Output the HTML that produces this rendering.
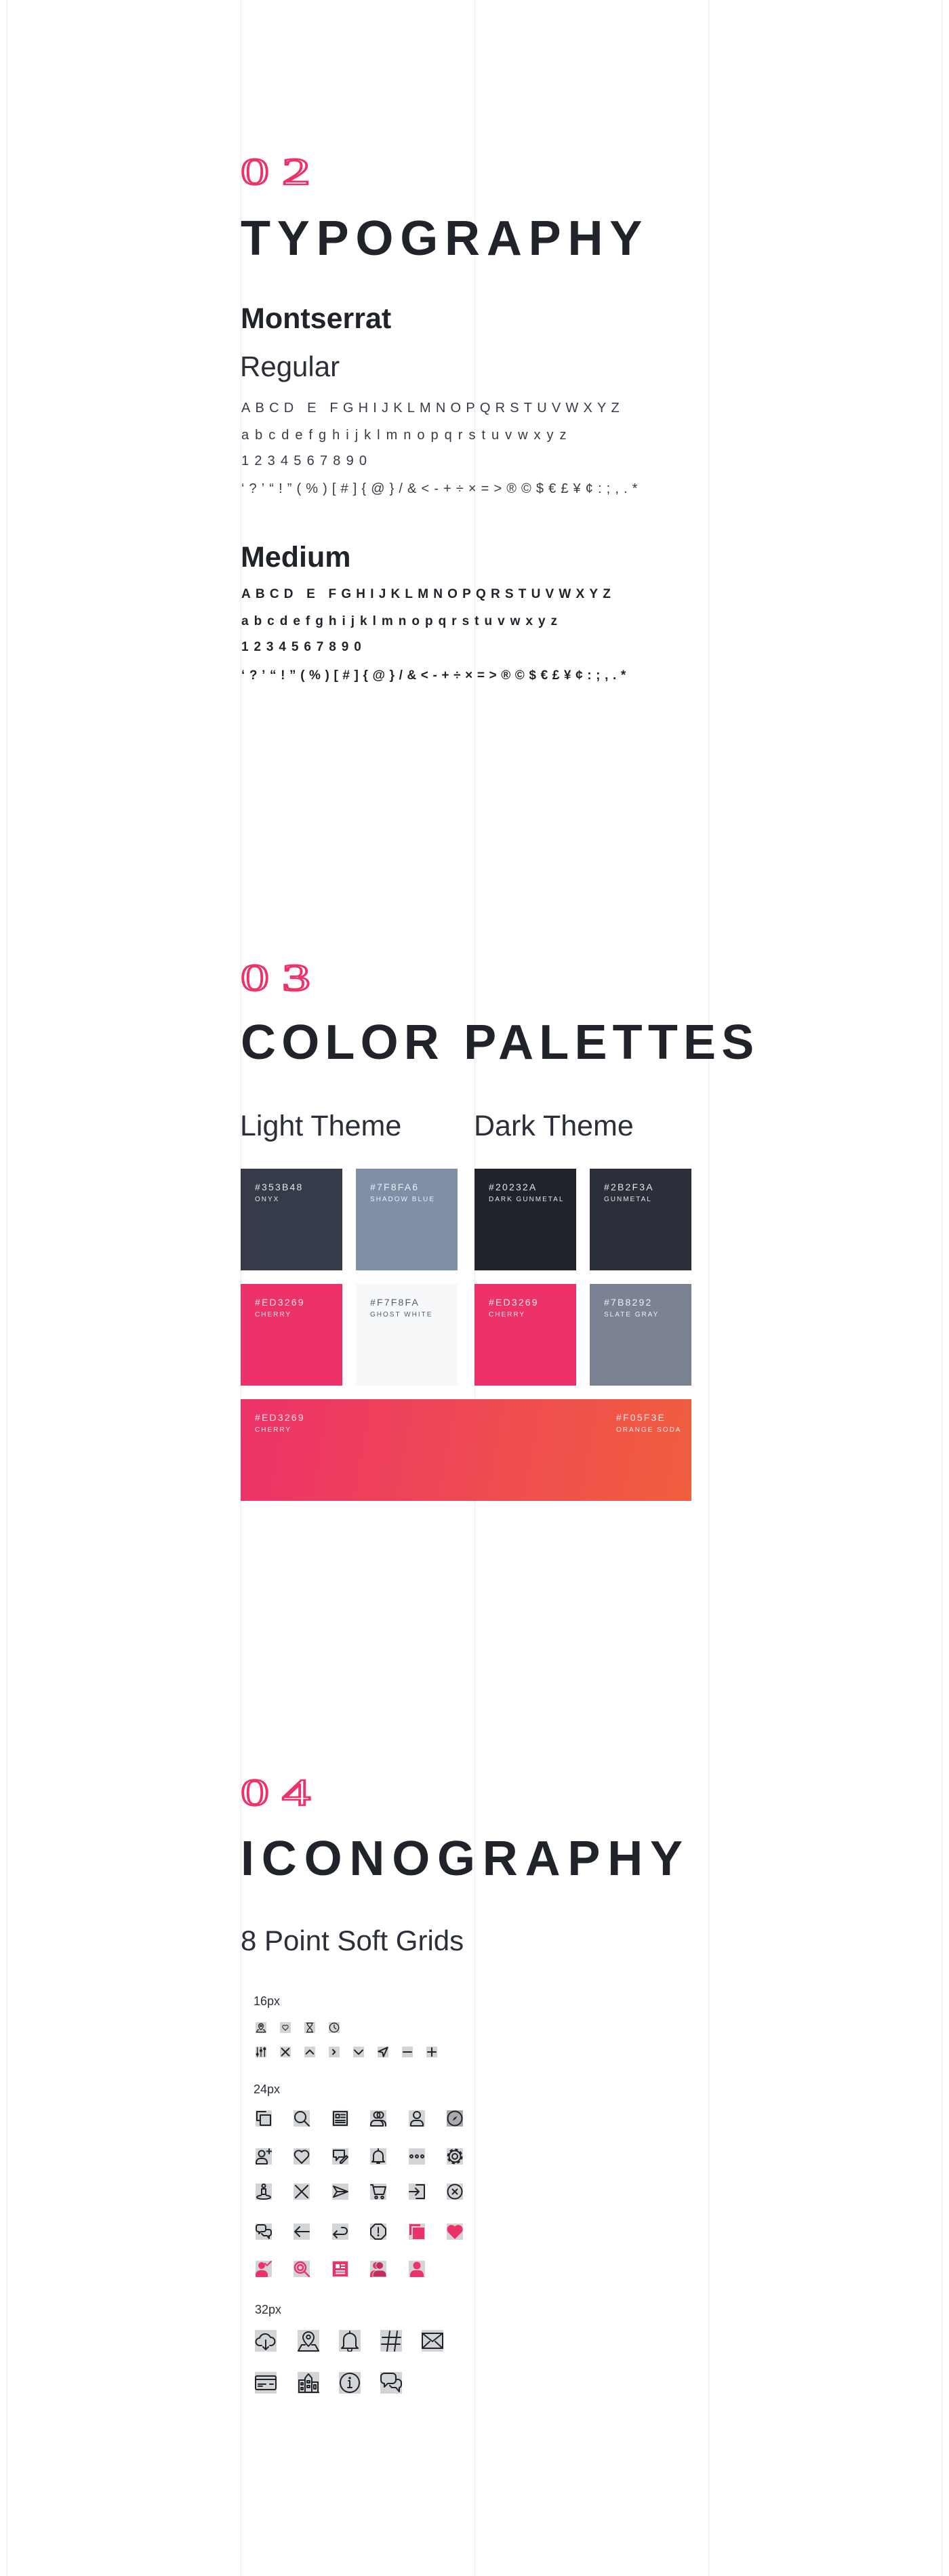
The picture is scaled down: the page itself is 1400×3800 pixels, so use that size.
<!DOCTYPE html>
<html><head><meta charset="utf-8">
<style>
*{margin:0;padding:0;box-sizing:border-box}
html,body{width:1400px;height:3800px;background:#fff;overflow:hidden}
body{position:relative;font-family:"Liberation Sans",sans-serif;color:#20232a}
.vl{position:absolute;top:0;width:1px;height:3800px;background:#ebebeb}
.a{position:absolute;line-height:1;white-space:nowrap}
.num{position:absolute;line-height:1;font-family:"Liberation Serif",serif;font-size:56px;color:transparent;-webkit-text-stroke:2.6px #ed3269;transform:scaleX(1.5);transform-origin:left top}
.h1{font-size:72px;font-weight:bold;color:#20232a}
.sw{position:absolute;width:150px;height:150px}
.sw .hx{position:absolute;left:21px;top:20px;font-size:14px;letter-spacing:2.2px;line-height:1}
.sw .lb{position:absolute;left:21px;top:41px;font-size:10px;letter-spacing:2px;line-height:1}
svg.i{position:absolute;background:#d3d4d6}
svg.i *{fill:none;stroke:#20232a;stroke-width:2;stroke-linecap:round;stroke-linejoin:round}
svg.i .f{fill:#20232a;stroke:none}
svg.i .p{fill:#ed3269;stroke:none}
svg.i .ps{stroke:#ed3269}
svg.i .w{fill:#fff;stroke:none}
</style></head><body>
<div class="vl" style="left:10px"></div>
<div class="vl" style="left:355px"></div>
<div class="vl" style="left:700px"></div>
<div class="vl" style="left:1045px"></div>
<div class="vl" style="left:1389px"></div>

<!-- 02 TYPOGRAPHY -->
<div class="num" style="left:355px;top:226px">0</div>
<div class="num" style="left:416px;top:226px">2</div>
<div class="a h1" style="left:355px;top:316px;letter-spacing:9.8px">TYPOGRAPHY</div>
<div class="a" style="left:355px;top:449px;font-size:43px;font-weight:bold">Montserrat</div>
<div class="a" style="left:354px;top:520px;font-size:42px;color:#2b2f3a">Regular</div>
<div class="a" style="left:356px;top:592px;font-size:20px;letter-spacing:7.2px;color:#353b48">ABCD E FGHIJKLMNOPQRSTUVWXYZ</div>
<div class="a" style="left:356px;top:632px;font-size:20px;letter-spacing:9px;color:#353b48">abcdefghijklmnopqrstuvwxyz</div>
<div class="a" style="left:356px;top:670px;font-size:20px;letter-spacing:8.2px;color:#353b48">1234567890</div>
<div class="a" style="left:356px;top:711px;font-size:20px;letter-spacing:7.1px;color:#353b48">‘?’“!”(%)[#]{@}/&amp;&lt;-+÷×=&gt;®©$€£¥¢:;,.*</div>
<div class="a" style="left:355px;top:801px;font-size:43px;font-weight:bold">Medium</div>
<div class="a" style="left:356px;top:867px;font-size:19px;font-weight:bold;letter-spacing:7.2px">ABCD E FGHIJKLMNOPQRSTUVWXYZ</div>
<div class="a" style="left:356px;top:907px;font-size:19px;font-weight:bold;letter-spacing:8px">abcdefghijklmnopqrstuvwxyz</div>
<div class="a" style="left:356px;top:945px;font-size:19px;font-weight:bold;letter-spacing:7.9px">1234567890</div>
<div class="a" style="left:356px;top:987px;font-size:19px;font-weight:bold;letter-spacing:6.6px">‘?’“!”(%)[#]{@}/&amp;&lt;-+÷×=&gt;®©$€£¥¢:;,.*</div>

<!-- 03 COLOR PALETTES -->
<div class="num" style="left:355px;top:1415px">0</div>
<div class="num" style="left:416px;top:1415px">3</div>
<div class="a h1" style="left:355px;top:1502px;letter-spacing:8.2px">COLOR PALETTES</div>
<div class="a" style="left:354px;top:1640px;font-size:43px;color:#2b2f3a">Light Theme</div>
<div class="a" style="left:699px;top:1640px;font-size:43px;color:#2b2f3a">Dark Theme</div>

<div class="sw" style="left:355px;top:1724px;background:#353b48;color:#e4e6ea"><div class="hx">#353B48</div><div class="lb">ONYX</div></div>
<div class="sw" style="left:525px;top:1724px;background:#7f8fa6;color:#eef0f4"><div class="hx">#7F8FA6</div><div class="lb">SHADOW BLUE</div></div>
<div class="sw" style="left:700px;top:1724px;background:#20232a;color:#e4e6ea"><div class="hx">#20232A</div><div class="lb">DARK GUNMETAL</div></div>
<div class="sw" style="left:870px;top:1724px;background:#2b2f3a;color:#e4e6ea"><div class="hx">#2B2F3A</div><div class="lb">GUNMETAL</div></div>
<div class="sw" style="left:355px;top:1894px;background:#ed3269;color:#fde6ee"><div class="hx">#ED3269</div><div class="lb">CHERRY</div></div>
<div class="sw" style="left:525px;top:1894px;background:#f7f8fa;color:#555a66"><div class="hx">#F7F8FA</div><div class="lb">GHOST WHITE</div></div>
<div class="sw" style="left:700px;top:1894px;background:#ed3269;color:#fde6ee"><div class="hx">#ED3269</div><div class="lb">CHERRY</div></div>
<div class="sw" style="left:870px;top:1894px;background:#7b8292;color:#eef0f4"><div class="hx">#7B8292</div><div class="lb">SLATE GRAY</div></div>
<div class="sw" style="left:355px;top:2064px;width:665px;background:linear-gradient(100deg,#ed3269,#f05f3e);color:#fde6ee"><div class="hx">#ED3269</div><div class="lb">CHERRY</div>
<div class="hx" style="left:554px">#F05F3E</div><div class="lb" style="left:554px">ORANGE SODA</div></div>

<!-- 04 ICONOGRAPHY -->
<div class="num" style="left:355px;top:2617px">0</div>
<div class="num" style="left:416px;top:2617px">4</div>
<div class="a h1" style="left:355px;top:2706px;letter-spacing:10.8px">ICONOGRAPHY</div>
<div class="a" style="left:355px;top:2842px;font-size:42px;color:#2b2f3a">8 Point Soft Grids</div>
<div class="a" style="left:374px;top:2943px;font-size:18px;color:#2b2f3a">16px</div>
<div class="a" style="left:374px;top:3073px;font-size:18px;color:#2b2f3a">24px</div>
<div class="a" style="left:376px;top:3398px;font-size:18px;color:#2b2f3a">32px</div>

<!-- 16px row1 -->
<svg class="i" style="left:377px;top:2983px" width="16" height="16" viewBox="0 0 24 24"><g style="stroke-width:1.6"><path d="M12 17s-5-5-5-9a5 5 0 0 1 10 0c0 4-5 9-5 9z"/><circle cx="12" cy="8" r="1.8"/><path d="M7 17H5l-3 5h20l-3-5h-2"/></g></svg>
<svg class="i" style="left:413px;top:2983px" width="16" height="16" viewBox="0 0 24 24"><path style="stroke-width:1.6" d="M12 18l-5.5-5.5A3.3 3.3 0 0 1 12 8a3.3 3.3 0 0 1 5.5 4.5z"/></svg>
<svg class="i" style="left:449px;top:2983px" width="16" height="16" viewBox="0 0 24 24"><g style="stroke-width:1.8"><path d="M5 2h14M5 22h14M7 2v4l5 6-5 6v4M17 2v4l-5 6 5 6v4"/></g></svg>
<svg class="i" style="left:485px;top:2983px" width="16" height="16" viewBox="0 0 24 24"><g style="stroke-width:1.6"><circle cx="12" cy="12" r="10"/><path d="M12 6v6l4 3"/></g></svg>
<!-- 16px row2 -->
<svg class="i" style="left:377px;top:3019px" width="16" height="16" viewBox="0 0 24 24"><g style="stroke-width:3"><path d="M4 2v20M12 2v20M20 2v20"/><circle class="f" cx="4" cy="17" r="3"/><circle class="f" cx="12" cy="9" r="3"/><circle class="f" cx="20" cy="5" r="3"/></g></svg>
<svg class="i" style="left:413px;top:3019px" width="16" height="16" viewBox="0 0 24 24"><path style="stroke-width:3" d="M4 4l16 16M20 4L4 20"/></svg>
<svg class="i" style="left:449px;top:3019px" width="16" height="16" viewBox="0 0 24 24"><path style="stroke-width:3" d="M4 16l8-8 8 8"/></svg>
<svg class="i" style="left:485px;top:3019px" width="16" height="16" viewBox="0 0 24 24"><path style="stroke-width:3" d="M9 7l5 5-5 5"/></svg>
<svg class="i" style="left:521px;top:3019px" width="16" height="16" viewBox="0 0 24 24"><path style="stroke-width:3" d="M3 8l9 9 9-9"/></svg>
<svg class="i" style="left:557px;top:3019px" width="16" height="16" viewBox="0 0 24 24"><path style="stroke-width:3" d="M22 2L2 11l9 2 2 9z"/></svg>
<svg class="i" style="left:593px;top:3019px" width="16" height="16" viewBox="0 0 24 24"><path style="stroke-width:3" d="M3 12h18"/></svg>
<svg class="i" style="left:629px;top:3019px" width="16" height="16" viewBox="0 0 24 24"><path style="stroke-width:3" d="M3 12h18M12 3v18"/></svg>

<!-- 24 row1 -->
<svg class="i" style="left:377px;top:3113px" width="24" height="24" viewBox="0 0 24 24"><g style="stroke-width:2.4;stroke-linecap:butt;stroke-linejoin:miter"><path d="M15 2H2v13h4"/><rect x="7" y="7" width="15" height="15"/></g></svg>
<svg class="i" style="left:433px;top:3113px" width="24" height="24" viewBox="0 0 24 24"><circle cx="10" cy="10" r="8"/><path d="M16 16l7 7"/></svg>
<svg class="i" style="left:490px;top:3113px" width="24" height="24" viewBox="0 0 24 24"><g style="stroke-linejoin:miter"><rect x="2" y="2" width="20" height="20"/><rect x="5.5" y="6" width="5" height="5"/><path d="M13 6.5h6M13 10.5h6M5 15h14M5 18h14"/></g></svg>
<svg class="i" style="left:546px;top:3113px" width="24" height="24" viewBox="0 0 24 24"><circle cx="10" cy="7" r="4.5"/><circle cx="15" cy="7" r="4.5"/><path d="M1 23v-2a6 6 0 0 1 6-6h6a6 6 0 0 1 6 6v2z"/><path d="M15 15h2a6 6 0 0 1 6 6v2"/></svg>
<svg class="i" style="left:603px;top:3113px" width="24" height="24" viewBox="0 0 24 24"><circle cx="12" cy="7" r="5"/><path d="M3 23v-2a6 6 0 0 1 6-6h6a6 6 0 0 1 6 6v2z"/></svg>
<svg class="i" style="left:659px;top:3113px;background:#a9abaf" width="24" height="24" viewBox="0 0 24 24"><circle cx="12" cy="12" r="10.5"/><path class="f" d="M15.5 8.5L13 13l-4.5 2.5L11 11z"/></svg>
<!-- 24 row2 -->
<svg class="i" style="left:377px;top:3169px" width="24" height="24" viewBox="0 0 24 24"><circle cx="9" cy="8" r="4.5"/><path d="M1 23v-2a6 6 0 0 1 6-6h4a6 6 0 0 1 6 6v2z"/><path d="M20 1v7M16.5 4.5h7"/></svg>
<svg class="i" style="left:433px;top:3169px" width="24" height="24" viewBox="0 0 24 24"><path d="M12 22L3 13A5.3 5.3 0 0 1 12 5.5 5.3 5.3 0 0 1 21 13z"/></svg>
<svg class="i" style="left:490px;top:3169px" width="24" height="24" viewBox="0 0 24 24"><path d="M2 3h16v10H10l-4 5v-5H2z"/><path d="M12 20l9-9 2 2-9 9h-2z"/></svg>
<svg class="i" style="left:546px;top:3169px" width="24" height="24" viewBox="0 0 24 24"><path d="M5 18v-7a7 7 0 0 1 14 0v7l2 2H3z"/><path d="M10 22h4M12 1v3"/></svg>
<svg class="i" style="left:603px;top:3169px" width="24" height="24" viewBox="0 0 24 24"><circle cx="4" cy="12" r="2"/><circle cx="12" cy="12" r="2"/><circle cx="20" cy="12" r="2"/></svg>
<svg class="i" style="left:659px;top:3169px" width="24" height="24" viewBox="0 0 24 24"><circle cx="12" cy="12" r="4"/><circle cx="12" cy="12" r="8.5" style="stroke-width:2"/><circle cx="12" cy="12" r="10" style="stroke-width:3;stroke-dasharray:4.2 3.65;stroke-linecap:butt"/></svg>
<!-- 24 row3 -->
<svg class="i" style="left:377px;top:3221px" width="24" height="24" viewBox="0 0 24 24"><circle cx="12" cy="3.5" r="2.5"/><path d="M9 8h6v8h-6z"/><path d="M8 17.5c-4 .6-6 1.6-6 2.7C2 21.8 6.5 23 12 23s10-1.2 10-2.8c0-1.1-2-2.1-6-2.7"/></svg>
<svg class="i" style="left:433px;top:3221px" width="24" height="24" viewBox="0 0 24 24"><path d="M3 3l18 18M21 3L3 21"/></svg>
<svg class="i" style="left:490px;top:3221px" width="24" height="24" viewBox="0 0 24 24"><path d="M2 4l21 8-21 8 5-8z"/><path d="M7 12h15"/></svg>
<svg class="i" style="left:546px;top:3221px" width="24" height="24" viewBox="0 0 24 24"><path d="M1 2h3l3 14h13l3-11H5"/><circle cx="9" cy="20.5" r="1.8"/><circle cx="18" cy="20.5" r="1.8"/></svg>
<svg class="i" style="left:603px;top:3221px" width="24" height="24" viewBox="0 0 24 24"><g style="stroke-linejoin:miter"><path d="M11 2h12v20H11"/><path d="M1 12h14M10 7l5 5-5 5"/></g></svg>
<svg class="i" style="left:659px;top:3221px" width="24" height="24" viewBox="0 0 24 24"><circle cx="12" cy="12" r="10.5"/><path d="M8.5 8.5l7 7M15.5 8.5l-7 7"/></svg>
<!-- 24 row4 -->
<svg class="i" style="left:377px;top:3280px" width="24" height="24" viewBox="0 0 24 24"><path d="M4 2h8a3 3 0 0 1 3 3v4a3 3 0 0 1-3 3H8l-3 3v-3H4a3 3 0 0 1-3-3V5a3 3 0 0 1 3-3z"/><path d="M15 9h5a3 3 0 0 1 3 3v3a3 3 0 0 1-3 3v4l-3-4h-5l-3-3"/></svg>
<svg class="i" style="left:433px;top:3280px" width="24" height="24" viewBox="0 0 24 24"><path d="M23 12H2M9 5l-7 7 7 7"/></svg>
<svg class="i" style="left:490px;top:3280px" width="24" height="24" viewBox="0 0 24 24"><path d="M14 6h3a5 5 0 0 1 0 10H2M7 11l-5 5 5 5"/></svg>
<svg class="i" style="left:546px;top:3280px" width="24" height="24" viewBox="0 0 24 24"><path d="M7.5 1h9L23 7.5v9L16.5 23h-9L1 16.5v-9z"/><path d="M12 6v8"/><circle class="f" cx="12" cy="17.5" r="1.5"/></svg>
<svg class="i" style="left:603px;top:3280px" width="24" height="24" viewBox="0 0 24 24"><path class="p" d="M1 1h16v3H4v13H1z"/><rect class="p" x="6" y="6" width="17" height="17"/></svg>
<svg class="i" style="left:659px;top:3280px" width="24" height="24" viewBox="0 0 24 24"><path class="p" d="M12 23L2 13A6 6 0 0 1 12 4.5 6 6 0 0 1 22 13z"/></svg>
<!-- 24 row5 -->
<svg class="i" style="left:377px;top:3335px" width="24" height="24" viewBox="0 0 24 24"><circle class="p" cx="9" cy="7" r="5"/><path class="p" d="M0 24v-3a7 7 0 0 1 7-7h4a7 7 0 0 1 7 7v3z"/><path class="ps" d="M14 4l3 3 6-6"/></svg>
<svg class="i" style="left:433px;top:3335px" width="24" height="24" viewBox="0 0 24 24"><circle class="ps" cx="10" cy="10" r="8" style="stroke-width:2.5"/><circle class="ps" cx="10" cy="10" r="4" style="stroke-width:2.5"/><path class="ps" d="M16 16l7 7" style="stroke-width:2.5"/></svg>
<svg class="i" style="left:490px;top:3335px" width="24" height="24" viewBox="0 0 24 24"><rect class="p" x="1" y="1" width="22" height="22"/><rect class="w" x="5" y="5" width="6" height="6"/><rect class="w" x="13" y="5" width="6" height="2"/><rect class="w" x="13" y="9" width="6" height="2"/><rect class="w" x="5" y="14" width="14" height="2"/><rect class="w" x="5" y="17.5" width="14" height="2"/></svg>
<svg class="i" style="left:546px;top:3335px" width="24" height="24" viewBox="0 0 24 24"><circle class="p" cx="9" cy="7" r="5"/><path class="p" d="M0 24v-3a7 7 0 0 1 7-7h4a7 7 0 0 1 7 7v3z"/><circle cx="14" cy="7" r="5.5" style="fill:#c42c59;stroke:#d3d4d6;stroke-width:1"/><path d="M4 24v-3a7 7 0 0 1 7-7h6a7 7 0 0 1 7 7v3z" style="fill:#c42c59;stroke:#d3d4d6;stroke-width:1"/></svg>
<svg class="i" style="left:603px;top:3335px" width="24" height="24" viewBox="0 0 24 24"><circle class="p" cx="12" cy="7" r="5.5"/><path class="p" d="M2 24v-3a7 7 0 0 1 7-7h6a7 7 0 0 1 7 7v3z"/></svg>

<!-- 32 row1 -->
<svg class="i" style="left:376px;top:3437px" width="32" height="32" viewBox="0 0 32 32"><path d="M10 23H7a5.5 5.5 0 0 1 0-11 8.5 8.5 0 0 1 16-1 6 6 0 0 1 1 12h-2"/><path d="M16 15v14M12 25l4 4 4-4"/></svg>
<svg class="i" style="left:439px;top:3437px" width="32" height="32" viewBox="0 0 32 32"><path d="M16 24s-8-7.5-8-13a8 8 0 0 1 16 0c0 5.5-8 13-8 13z"/><circle cx="16" cy="10.5" r="2.8"/><path d="M11 22H6l-5 9h30l-5-9h-5"/></svg>
<svg class="i" style="left:500px;top:3437px" width="32" height="32" viewBox="0 0 32 32"><path d="M7 24V14a9 9 0 0 1 18 0v10l3 3H4z"/><path d="M13 29a3 3 0 0 0 6 0M16 2v3"/></svg>
<svg class="i" style="left:561px;top:3437px" width="32" height="32" viewBox="0 0 32 32"><path d="M14 2l-4 29M25 2l-4 29M3 11h27M2 21h27"/></svg>
<svg class="i" style="left:622px;top:3437px" width="32" height="32" viewBox="0 0 32 32"><g style="stroke-linejoin:miter;stroke-width:2.2"><rect x="1" y="5" width="30" height="22"/><path d="M1 5l15 12 15-12M1 27l11-10M31 27L20 17"/></g></svg>
<!-- 32 row2 -->
<svg class="i" style="left:376px;top:3499px" width="32" height="32" viewBox="0 0 32 32"><rect x="1" y="6" width="30" height="20" rx="2"/><path d="M1 11h30M5 18h11M5 21h6M22 18h5"/></svg>
<svg class="i" style="left:439px;top:3499px" width="32" height="32" viewBox="0 0 32 32"><g style="stroke-linejoin:miter"><path d="M2 30h29"/><path d="M2 30V12h9v18M11 30V9l5-6 5 6v21M21 30V15h9v15"/><path d="M5 16h3v3H5zM5 23h3v3H5zM14 13h4v3h-4zM14 20h4v3h-4zM24 19h3v6h-3z"/></g></svg>
<svg class="i" style="left:500px;top:3499px" width="32" height="32" viewBox="0 0 32 32"><circle cx="16" cy="16" r="14"/><circle class="f" cx="16" cy="9" r="1.8"/><path d="M14 13h2v10M13 23h6"/></svg>
<svg class="i" style="left:561px;top:3499px" width="32" height="32" viewBox="0 0 32 32"><path d="M6 2h12a5 5 0 0 1 5 5v5a5 5 0 0 1-5 5h-7l-5 5v-5a5 5 0 0 1-5-5V7a5 5 0 0 1 5-5z"/><path d="M23 11h3a5 5 0 0 1 5 5v3a4 4 0 0 1-3 4v6l-5-6h-6l-3-3"/></svg>
</body></html>
